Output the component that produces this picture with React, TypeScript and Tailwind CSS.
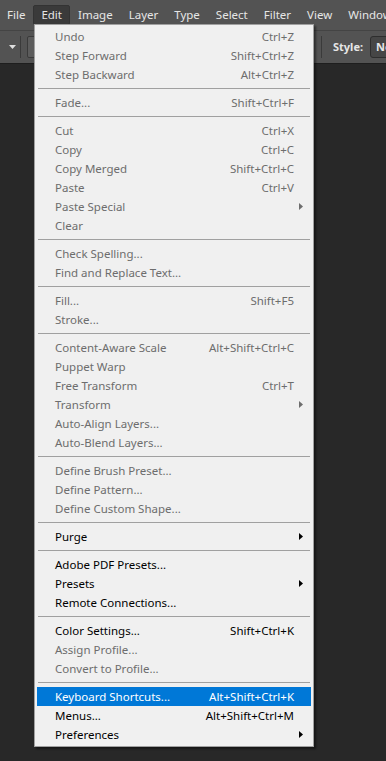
import React from 'react';

type Item =
  | { sep: true }
  | { label: string; shortcut?: string; disabled?: boolean; sub?: boolean; active?: boolean; sep?: false };

const menuBar = ['File', 'Edit', 'Image', 'Layer', 'Type', 'Select', 'Filter', 'View', 'Window'];

const items: Item[] = [
  { label: 'Undo', shortcut: 'Ctrl+Z', disabled: true },
  { label: 'Step Forward', shortcut: 'Shift+Ctrl+Z', disabled: true },
  { label: 'Step Backward', shortcut: 'Alt+Ctrl+Z', disabled: true },
  { sep: true },
  { label: 'Fade...', shortcut: 'Shift+Ctrl+F', disabled: true },
  { sep: true },
  { label: 'Cut', shortcut: 'Ctrl+X', disabled: true },
  { label: 'Copy', shortcut: 'Ctrl+C', disabled: true },
  { label: 'Copy Merged', shortcut: 'Shift+Ctrl+C', disabled: true },
  { label: 'Paste', shortcut: 'Ctrl+V', disabled: true },
  { label: 'Paste Special', disabled: true, sub: true },
  { label: 'Clear', disabled: true },
  { sep: true },
  { label: 'Check Spelling...', disabled: true },
  { label: 'Find and Replace Text...', disabled: true },
  { sep: true },
  { label: 'Fill...', shortcut: 'Shift+F5', disabled: true },
  { label: 'Stroke...', disabled: true },
  { sep: true },
  { label: 'Content-Aware Scale', shortcut: 'Alt+Shift+Ctrl+C', disabled: true },
  { label: 'Puppet Warp', disabled: true },
  { label: 'Free Transform', shortcut: 'Ctrl+T', disabled: true },
  { label: 'Transform', disabled: true, sub: true },
  { label: 'Auto-Align Layers...', disabled: true },
  { label: 'Auto-Blend Layers...', disabled: true },
  { sep: true },
  { label: 'Define Brush Preset...', disabled: true },
  { label: 'Define Pattern...', disabled: true },
  { label: 'Define Custom Shape...', disabled: true },
  { sep: true },
  { label: 'Purge', sub: true },
  { sep: true },
  { label: 'Adobe PDF Presets...' },
  { label: 'Presets', sub: true },
  { label: 'Remote Connections...' },
  { sep: true },
  { label: 'Color Settings...', shortcut: 'Shift+Ctrl+K' },
  { label: 'Assign Profile...', disabled: true },
  { label: 'Convert to Profile...', disabled: true },
  { sep: true },
  { label: 'Keyboard Shortcuts...', shortcut: 'Alt+Shift+Ctrl+K', active: true },
  { label: 'Menus...', shortcut: 'Alt+Shift+Ctrl+M' },
  { label: 'Preferences', sub: true },
];

const Arrow = ({ color }: { color: string }) => (
  <svg width="4" height="7" viewBox="0 0 4 7" className="absolute right-[8px] top-[6px]">
    <path d="M0 0 L4 3.5 L0 7 Z" fill={color} />
  </svg>
);

export default function App() {
  return (
    <div className="relative w-[386px] h-[761px] overflow-hidden bg-[#282828] font-['Noto_Sans',sans-serif]">
      {/* menu bar */}
      <div className="flex h-[30px] items-center overflow-hidden bg-[#535353] text-[11.5px] text-[#e6e6e6]">
        {menuBar.map((m, i) => (
          <div
            key={m}
            className={`flex h-[20px] shrink-0 items-center whitespace-nowrap rounded-[2px] ${
              i === 0 ? 'pl-[6px] pr-[7px]' : 'px-[7px]'
            } ${m === 'Edit' ? 'border border-[#333] bg-[#3a3a3a]' : 'border border-transparent'}`}
          >
            {m}
          </div>
        ))}
      </div>

      {/* options bar */}
      <div className="flex h-[34px] items-center border-t border-[#444] border-b border-b-[#1e1e1e] bg-[#535353]">
        <svg width="7" height="4" viewBox="0 0 7 4" className="ml-[9px]">
          <path d="M0 0 H7 L3.5 4 Z" fill="#e0e0e0" />
        </svg>
        <div className="ml-[4px] h-[22px] w-[1px] bg-[#3a3a3a]" />
        <div className="ml-[6px] h-[22px] w-[20px] rounded-[2px] border border-[#3a3a3a] bg-[#5c5c5c]" />
        <div className="ml-auto flex w-[65px] shrink-0 items-center overflow-hidden">
          <div className="h-[22px] w-[1px] shrink-0 bg-[#3a3a3a]" />
          <span className="ml-[11px] shrink-0 text-[11px] font-bold text-[#e6e6e6]">Style:</span>
          <div className="ml-[7px] flex h-[22px] w-[40px] shrink-0 items-center rounded-l-[3px] border border-[#2e2e2e] bg-[#464646] pl-[5px] text-[11px] font-bold text-[#e6e6e6]">
            Nor
          </div>
        </div>
      </div>

      {/* edit dropdown */}
      <div className="absolute left-[34px] top-[24px] w-[280px] border border-[#a0a0a0] bg-[#f0f0f0] p-[2px] shadow-[2px_2px_2px_rgba(0,0,0,0.45)]">
        {items.map((it, i) =>
          it.sep ? (
            <div key={i} className="mx-[1px] my-[4px] h-[1px] border-t border-[#a0a0a0]" />
          ) : (
            <div
              key={i}
              className={`relative flex h-[19px] items-center whitespace-nowrap pl-[18px] pr-[17px] text-[11.5px] ${
                it.active ? 'bg-[#0078d7] text-white' : it.disabled ? 'text-[#6d6d6d]' : 'text-black'
              }`}
            >
              <span>{it.label}</span>
              {it.shortcut && <span className="ml-auto">{it.shortcut}</span>}
              {it.sub && <Arrow color={it.disabled ? '#6d6d6d' : '#000'} />}
            </div>
          )
        )}
      </div>
    </div>
  );
}
